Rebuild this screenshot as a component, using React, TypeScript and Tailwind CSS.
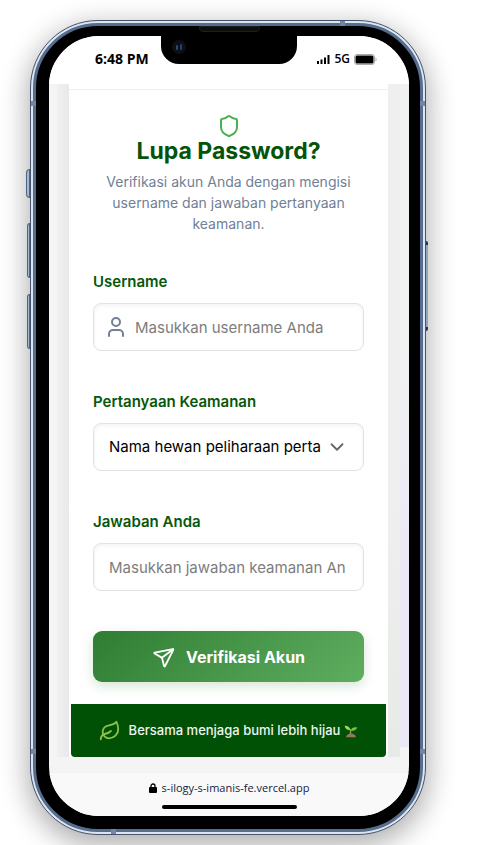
import { ChevronDown, Leaf, Send, Shield, User } from "lucide-react";

const inputClass =
  "h-12 w-full rounded-lg border border-[#e2e2e2] bg-white text-[15px] text-black shadow-[inset_0_2px_4px_rgba(0,0,0,0.05)] outline-none placeholder:text-[#7d7d7d]";
const labelClass = "mb-[11px] block text-[15px] leading-[21px] font-semibold text-[#07570b]";

function Seedling() {
  return (
    <svg viewBox="0 0 14 14" className="h-[14px] w-[14px] shrink-0" role="img" aria-label="Seedling">
      <path d="M6.5 11V5.5" stroke="#7cb342" strokeWidth="1.3" />
      <path d="M6.6 6C5.9 3 3 1.5.7 1.8.8 4.6 3.3 6.6 6.6 6Z" fill="#a4d94e" />
      <path d="M6.7 6.4C7.5 3.6 10.5 2.5 13.3 3.6 12.4 6.2 9.4 7.6 6.7 6.4Z" fill="#7cc043" />
      <path d="M2 13.3C2.6 10.9 4.6 9.6 7 9.6s4.4 1.3 5 3.7Z" fill="#9c7263" />
    </svg>
  );
}

function LeftKeys() {
  return (
    <div className="z-10 flex w-1 shrink-0 flex-col items-end pt-[149px]" aria-hidden="true">
      <span className="h-[29px] w-1 rounded-l-sm border border-[#4d6482] bg-[#a4bad3]" />
      <span className="mt-[25px] h-[55px] w-[3px] rounded-l-sm border border-[#4d6482] bg-[#a4bad3]" />
      <span className="mt-4 h-[55px] w-[3px] rounded-l-sm border border-[#4d6482] bg-[#a4bad3]" />
    </div>
  );
}

function RightKey() {
  return (
    <div className="z-10 w-[2px] shrink-0 pt-[221px]" aria-hidden="true">
      <span className="block h-[90px] w-[2px] rounded-r-sm border-y-4 border-[#26344e] bg-[#8fa6c2]" />
    </div>
  );
}

function AntennaBands() {
  return (
    <>
      <span className="absolute top-0 right-20 h-[5px] w-[5px] bg-[#7286ab]" />
      <span className="absolute bottom-0 left-20 h-[5px] w-[5px] bg-[#7286ab]" />
      <span className="absolute inset-x-0 top-20 flex justify-between">
        <i className="h-[5px] w-[5px] bg-[#7286ab]" />
        <i className="h-[5px] w-[5px] bg-[#7286ab]" />
      </span>
      <span className="absolute inset-x-0 bottom-20 flex justify-between">
        <i className="h-[5px] w-[5px] bg-[#7286ab]" />
        <i className="h-[5px] w-[5px] bg-[#7286ab]" />
      </span>
    </>
  );
}

function StatusBar() {
  return (
    <header className="grid h-12 grid-cols-[1fr_136px_1fr] items-start bg-white font-['Open_Sans',sans-serif] text-black">
      <span className="pt-[15px] pl-[46px] text-sm leading-4 font-bold whitespace-nowrap">6:48 PM</span>
      <span className="flex h-7 rounded-b-[18px] bg-black pt-1 pl-[11px]">
        <span className="flex h-[14px] w-[14px] items-center justify-center gap-[2px] rounded-full bg-[#0d0f14]">
          <i className="h-[5px] w-[2px] rounded-full bg-[#284b68]" />
          <i className="h-[6px] w-[2px] rounded-full bg-[#2a3890]" />
        </span>
      </span>
      <span className="flex items-center justify-end gap-1 pt-[15px] pr-8">
        <svg viewBox="0 0 13 9" className="h-[9px] w-[13px]" aria-hidden="true">
          <path d="M0 6h2v3H0zM3.5 4.5h2V9h-2zM7 2.500h2V9H7zM10.500 0h2v9h-2z" />
        </svg>
        <span className="text-xs leading-4 font-semibold">5G</span>
        <svg viewBox="0 0 23 11" className="h-[11px] w-[23px]" aria-hidden="true">
          <rect x=".5" y=".5" width="20" height="10" rx="2.5" fill="#fff" stroke="#aaa" />
          <rect x="1.5" y="1.5" width="18" height="8" rx="1.5" />
          <path d="M21.5 3.5c1.5.5 1.5 3.5 0 4Z" fill="#aaa" />
        </svg>
      </span>
    </header>
  );
}

function ResetForm() {
  return (
    <form className="flex flex-col gap-10 px-6 pb-[22px]" onSubmit={(e) => e.preventDefault()}>
      <div>
        <label htmlFor="username" className={labelClass}>Username</label>
        <div className="relative">
          <User className="absolute inset-y-0 left-[11px] my-auto h-6 w-6 text-[#718096]" strokeWidth={2} />
          <input id="username" type="text" placeholder="Masukkan username Anda" className={`${inputClass} pr-4 pl-[41px]`} />
        </div>
      </div>
      <div>
        <label htmlFor="question" className={labelClass}>Pertanyaan Keamanan</label>
        <div className="relative">
          <select id="question" className={`${inputClass} appearance-none pr-[42px] pl-[15px]`}>
            <option>Nama hewan peliharaan pertama Anda?</option>
          </select>
          <ChevronDown className="pointer-events-none absolute inset-y-0 right-4 my-auto h-[22px] w-[22px] text-[#666]" strokeWidth={2} />
        </div>
      </div>
      <div>
        <label htmlFor="answer" className={labelClass}>Jawaban Anda</label>
        <input id="answer" type="text" placeholder="Masukkan jawaban keamanan Anda" className={`${inputClass} pr-[17px] pl-[15px]`} />
      </div>
      <button
        type="submit"
        className="flex h-[51px] w-full items-center justify-center gap-3 rounded-[9px] bg-linear-135 from-[#2e7d32] to-[#5fae60] text-base font-bold text-white shadow-[0_4px_12px_rgba(46,125,50,0.2)]"
      >
        <Send className="h-[22px] w-[22px] rotate-[8deg]" strokeWidth={2} />
        Verifikasi Akun
      </button>
    </form>
  );
}

function Card() {
  return (
    <section className="min-w-0 flex-1 bg-white pt-[5px]">
      <div className="border-t border-[#f0f0f0] pt-6">
        <div className="px-6 pb-[37px] text-center">
          <Shield className="mx-auto h-6 w-6 text-[#4caf50]" strokeWidth={2} />
          <h1 className="text-[23px] leading-[26px] font-bold text-[#045307]">Lupa Password?</h1>
          <p className="mt-[7px] text-sm leading-[21px] text-[#718096]">
            Verifikasi akun Anda dengan mengisi username dan jawaban pertanyaan keamanan.
          </p>
        </div>
        <ResetForm />
      </div>
      <footer className="mx-[2px] flex h-[53px] items-center justify-center gap-2 rounded-b bg-[#005005] text-[13px] font-medium text-[#eef5ee]">
        <Leaf className="h-[22px] w-[22px] text-[#8bc34a]" strokeWidth={2} />
        <span className="flex items-center gap-1">
          Bersama menjaga bumi lebih hijau
          <Seedling />
        </span>
      </footer>
    </section>
  );
}

function AddressBar() {
  return (
    <div className="flex h-[43px] flex-col items-center justify-between bg-[#f9f9f9] pt-2 pb-[7px]">
      <a href="#address" className="flex items-center gap-[5px] font-['Open_Sans',sans-serif] text-[11px] leading-[14px] text-[#17213d]">
        <svg viewBox="0 0 8 10" className="h-[10px] w-2" aria-hidden="true">
          <rect y="4" width="8" height="6" rx="1" fill="#000" />
          <path d="M2 4.5V3a2 2 0 0 1 4 0v1.5" fill="none" stroke="#000" strokeWidth="1.3" />
        </svg>
        s-ilogy-s-imanis-fe.vercel.app
      </a>
      <span className="h-1 w-[135px] rounded-full bg-black" />
    </div>
  );
}

export default function App() {
  return (
    <main className="flex min-h-screen items-start overflow-hidden bg-white pt-5 pr-[71px] pb-[10px] pl-[26px]">
      <LeftKeys />
      <div className="relative w-full max-w-[396px] min-w-0 rounded-[68px] border border-[#46536a] bg-[#dbe6f2] p-[2px] shadow-[0_8px_28px_2px_rgba(0,0,0,0.33)]">
        <AntennaBands />
        <div className="rounded-[65px] border-[3px] border-[#566d8e] bg-black pr-[11px] pb-[13px] pl-[13px]">
          <div className="mx-auto mb-1 h-[6px] w-[61px] rounded-b-sm border border-[#1c1f1e] bg-[#0d0f0e]" />
          <div className="overflow-hidden rounded-[50px] bg-[#f4f4f4]">
            <StatusBar />
            <div className="flex pb-4 pl-2 font-[Inter,sans-serif]">
              <div className="w-3 bg-linear-to-r from-[#f0f0f0] to-[#e9e9e9]" />
              <Card />
              <div className="w-3 bg-linear-to-b from-[#efefef] from-60% to-[#e7eae7]" />
              <div className="mb-[10px] w-[9px] bg-linear-to-b from-[#f0f2f2] from-40% to-[#ebe7f5] to-75%" />
            </div>
            <AddressBar />
          </div>
        </div>
      </div>
      <RightKey />
    </main>
  );
}
